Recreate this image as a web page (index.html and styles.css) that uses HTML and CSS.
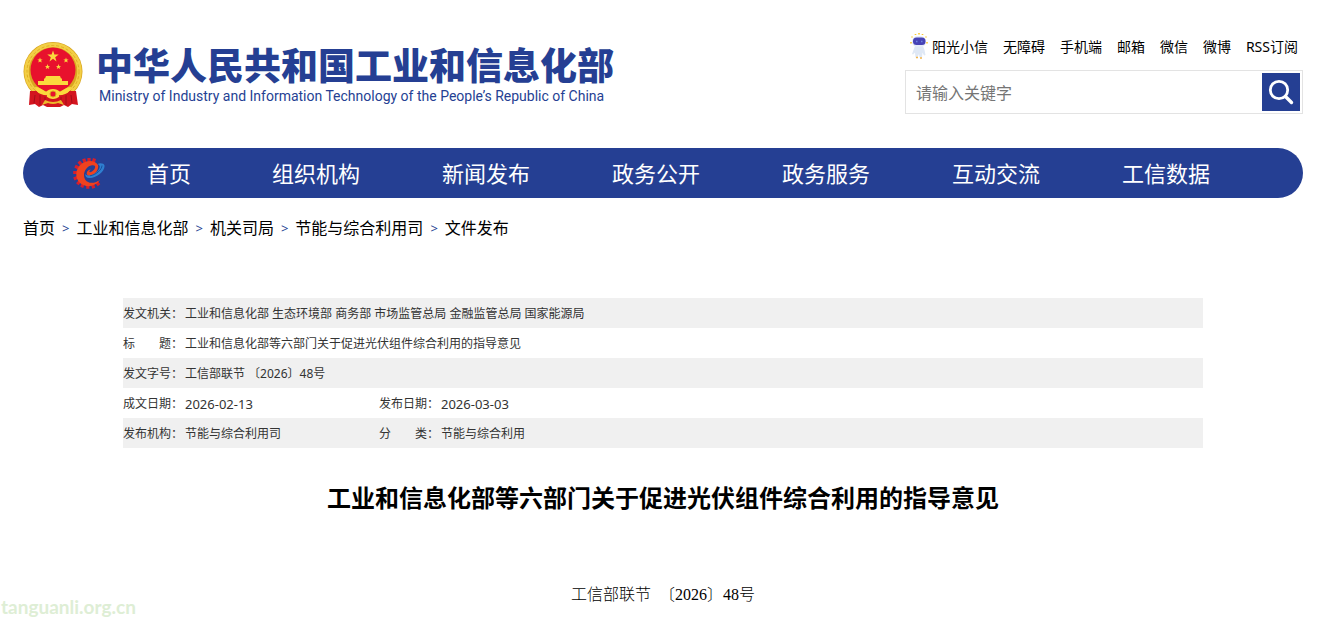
FILE: index.html
```html
<!DOCTYPE html>
<html lang="zh-CN">

<head>
    <meta charset="UTF-8">
    <meta name="viewport" content="width=device-width, initial-scale=1.0">
    <title>工业和信息化部等六部门关于促进光伏组件综合利用的指导意见</title>
    <link rel="stylesheet" href="styles.css">
</head>

<body>
    <div class="wrap">
        <header class="header">
            <a class="logo" href="#">
                <svg class="emblem" viewBox="0 0 60 66" aria-hidden="true">
                    <circle cx="30" cy="29.500" r="29.500" fill="#d9a520"/>
                    <circle cx="30" cy="29.500" r="26.500" fill="none" stroke="#f3cf45" stroke-width="4.500"/>
                    <circle cx="30" cy="29.500" r="26" fill="none" stroke="#e0ad25" stroke-width="1" stroke-dasharray="3 2"/>
                    <path d="M7 49l11 0 12 4 12-4 11 0 2 14-6-1-4 3-4-2-4 2H24l-4-2-4 2-4-3-6 1z" fill="#d3141f"/>
                    <path d="M12 53l-1 8M17 53v10M22 55v8M38 55v8M43 53v10M48 53l1 8" stroke="#a30d18" fill="none"/>
                    <circle cx="30" cy="28" r="22.500" fill="#e8112d"/>
                    <g fill="#fbd93d">
                        <path d="M30 8.500l1.400 4.100h4.300l-3.500 2.600 1.300 4.200-3.500-2.600-3.500 2.600 1.300-4.200-3.500-2.600h4.300z"/>
                        <path d="M17 15.500l.7 1.900h2l-1.600 1.200.6 2-1.700-1.200-1.700 1.200.6-2-1.600-1.200h2z"/>
                        <path d="M43 15.500l.7 1.900h2l-1.600 1.200.6 2-1.700-1.200-1.700 1.200.6-2-1.600-1.200h2z"/>
                        <path d="M24.500 22l.7 1.900h2l-1.600 1.200.6 2-1.700-1.200-1.700 1.200.6-2-1.600-1.200h2z"/>
                        <path d="M35.500 22l.7 1.900h2l-1.600 1.200.6 2-1.700-1.200-1.700 1.200.6-2-1.600-1.200h2z"/>
                        <path d="M23 34h14l1 2.500H22zM21 36.500h18v2.500H21zM15 39h30v4H15z"/>
                        <path d="M12 45c4 0 7 2 11 5 3-4 11-4 14 0 4-3 7-5 11-5-1 6-6 9-11 9-4 4-10 4-14 0-5 0-10-3-11-9z"/>
                    </g>
                    <circle cx="30" cy="52" r="3" fill="#e8112d" stroke="#d9a520" stroke-width="1"/>
                    <path d="M12 49c4 4 8 5 12 5M48 49c-4 4-8 5-12 5" stroke="#d3141f" stroke-width="1.500" fill="none"/>
                    <path d="M22 58q8 4 16 0l3 5-6-2q-5 2-10 0l-6 2z" fill="#edb62a"/>
                </svg>
                <span class="logo-text">
                    <span class="logo-cn">中华人民共和国工业和信息化部</span>
                    <span class="logo-en">Ministry of Industry and Information Technology of the People’s Republic of China</span>
                </span>
            </a>
            <div class="header-right">
                <div class="top-links">
                    <a class="robot-link" href="#">
                        <svg class="robot" viewBox="0 0 18 26" aria-hidden="true">
                            <path d="M2 3.500v1M5.500 1v1M9 0v1.500M12.500 1v1M16 3.500v1M1 9v1.500M17 9v1.500" stroke="#f7c72e" stroke-width="1.600"/>
                            <path d="M5 13h8l1.500 4 1 5-1.500.5-1.500-3-.5 5H9.500L9 21l-1.500 3.500H5.500l-.5-5-2 2-1-.5z" fill="#dfe8f5"/>
                            <rect x="2" y="3" width="14" height="11" rx="5.500" fill="#e5ebf8"/>
                            <rect x="3" y="4.500" width="12.500" height="7.500" rx="3.500" fill="#4743b5"/>
                            <path d="M6 8.500h1.500M11 8.500h1.500" stroke="#6f86e0" stroke-width="1.300"/>
                            <path d="M6 24.500h2M10 25h2" stroke="#f4b54b" stroke-width="1.500"/>
                        </svg>
                        <span>阳光小信</span>
                    </a>
                    <a href="#">无障碍</a>
                    <a href="#">手机端</a>
                    <a href="#">邮箱</a>
                    <a href="#">微信</a>
                    <a href="#">微博</a>
                    <a href="#">RSS订阅</a>
                </div>
                <form class="search">
                    <input type="text" placeholder="请输入关键字" aria-label="请输入关键字">
                    <button type="submit" aria-label="搜索">
                        <svg viewBox="0 0 38 38" aria-hidden="true">
                            <circle cx="17" cy="17" r="8.700" fill="none" stroke="#fff" stroke-width="2.800"/>
                            <path d="M23.500 23.500l6 6" stroke="#fff" stroke-width="3.400" stroke-linecap="round"/>
                        </svg>
                    </button>
                </form>
            </div>
        </header>

        <nav class="nav">
            <a class="nav-home" href="#">
                <svg class="nav-icon" viewBox="0 0 32 32" aria-hidden="true">
                    <g stroke="#d81e2c" stroke-width="3.200">
                        <path d="M21.500 1.500l-1.200 4M16 1v4M10.700 1.800l1.300 3.700M5.700 4.500l2.600 3M2 9.200l3.500 1.800M.2 15.500h4M.8 22l3.600-1.600M4.300 27.300l2.600-3M8.700 30.300l1.500-3.800M14.800 31.800v-4M20.800 31.200l-1.300-4M26 28.200l-2.500-3.200"/>
                    </g>
                    <path d="M25 8C22 3 14 3 9 6.500 2 11.500 1.500 21 7 26c6 5 15 4 20-3-6 4-12 3.500-14.500 0C9 18 12 10 18 8.500c4-1 5 1 3.500 3.500-1.500 2.500-4 3.500-5 3-.5-.5.500-2 1.500-2.500-3 0-5 3-4 5 1.500 2.500 7 1 9.500-3 1.500-2.500 2-4.500 1.500-6.500z" fill="#f0421e"/>
                    <path d="M24.500 7c3-1.500 6.500-.5 7 1.500.8 6-9 13-15.500 12.500-3-.3-4-2-3.500-4 2.500 3.500 9.500.5 13-4C27.500 10 27 8 24.500 7z" fill="#2f7fd0"/>
                    <path d="M29 8.500c0 4-6 9.500-12 10.300" stroke="#174f9e" stroke-width="1" fill="none"/>
                </svg>
                <span>首页</span>
            </a>
            <a href="#">组织机构</a>
            <a href="#">新闻发布</a>
            <a href="#">政务公开</a>
            <a href="#">政务服务</a>
            <a href="#">互动交流</a>
            <a href="#">工信数据</a>
        </nav>

        <div class="crumbs">
            <a href="#">首页</a>
            <span>&gt;</span>
            <a href="#">工业和信息化部</a>
            <span>&gt;</span>
            <a href="#">机关司局</a>
            <span>&gt;</span>
            <a href="#">节能与综合利用司</a>
            <span>&gt;</span>
            <a href="#">文件发布</a>
        </div>

        <main class="article">
            <table class="info">
                <colgroup>
                    <col class="col-label">
                    <col class="col-value">
                    <col class="col-label">
                    <col>
                </colgroup>
                <tr>
                    <th scope="row">发文机关：</th>
                    <td colspan="3">工业和信息化部 生态环境部 商务部 市场监管总局 金融监管总局 国家能源局</td>
                </tr>
                <tr>
                    <th scope="row">标　　题：</th>
                    <td colspan="3">工业和信息化部等六部门关于促进光伏组件综合利用的指导意见</td>
                </tr>
                <tr>
                    <th scope="row">发文字号：</th>
                    <td colspan="3">工信部联节 〔2026〕48号</td>
                </tr>
                <tr>
                    <th scope="row">成文日期：</th>
                    <td class="date">2026-02-13</td>
                    <th scope="row">发布日期：</th>
                    <td class="date">2026-03-03</td>
                </tr>
                <tr>
                    <th scope="row">发布机构：</th>
                    <td>节能与综合利用司</td>
                    <th scope="row">分　　类：</th>
                    <td>节能与综合利用</td>
                </tr>
            </table>
            <h1>工业和信息化部等六部门关于促进光伏组件综合利用的指导意见</h1>
            <p class="doc-no">工信部联节&ensp;〔2026〕48号</p>
        </main>
    </div>
    <div class="watermark">tanguanli.org.cn</div>
</body>

</html>
```

FILE: styles.css
```css
* {
    margin: 0;
    padding: 0;
    box-sizing: border-box;
}

body {
    position: relative;
    min-height: 100vh;
    padding: 0 28px 0 23px;
    background: #fff;
    color: #000;
    font-family: "Noto Sans", "Noto Sans CJK SC", sans-serif;
    font-size: 16px;
}

a {
    color: inherit;
    text-decoration: none;
}

.wrap {
    max-width: 1280px;
    margin: 0 auto;
}

/* 头部 */
.header {
    display: flex;
    justify-content: space-between;
    align-items: flex-start;
    height: 148px;
    padding-top: 33px;
}

.logo {
    display: flex;
    gap: 13px;
    padding-top: 9px;
    color: #253f93;
}

.emblem {
    width: 60px;
    height: 66px;
}

.logo-text {
    display: flex;
    flex-direction: column;
    white-space: nowrap;
}

.logo-cn {
    font-family: "Noto Sans CJK SC", sans-serif;
    font-size: 37px;
    line-height: 44px;
    font-weight: 900;
}

.logo-en {
    padding-left: 3px;
    font-family: Roboto, sans-serif;
    font-size: 14px;
    line-height: 20px;
}

.header-right {
    width: 398px;
}

.top-links {
    display: flex;
    justify-content: flex-end;
    align-items: center;
    gap: 15px;
    height: 26px;
    padding-right: 5px;
    font-size: 14px;
    white-space: nowrap;
}

.robot-link {
    display: flex;
    align-items: center;
    gap: 4px;
}

.robot {
    width: 18px;
    height: 26px;
}

.search {
    display: flex;
    height: 44px;
    margin-top: 11px;
    padding: 2px;
    border: 1px solid #e3e3e3;
}

.search input {
    flex: 1;
    min-width: 0;
    padding: 2px 8px 0;
    border: none;
    outline: none;
    font: inherit;
}

.search input::placeholder {
    color: #757575;
}

.search button {
    width: 38px;
    height: 38px;
    border: none;
    background: #253f93;
    cursor: pointer;
}

.search button svg {
    display: block;
}

/* 导航 */
.nav {
    display: flex;
    height: 50px;
    padding: 0 52px 0 50px;
    border-radius: 25px;
    background: #253f93;
    color: #fff;
    font-size: 22px;
    line-height: 50px;
    white-space: nowrap;
}

.nav a {
    flex: 1;
    text-align: center;
}

.nav .nav-home {
    display: flex;
    flex: 0 0 158px;
    align-items: center;
    gap: 42px;
}

.nav-icon {
    width: 32px;
    height: 32px;
}

/* 面包屑 */
.crumbs {
    display: flex;
    gap: 7px;
    padding-top: 18px;
    line-height: 24px;
}

.crumbs span {
    color: #253f93;
    font-size: 13px;
}

/* 正文 */
.article {
    max-width: 1080px;
    margin: 58px auto 0;
}

.info {
    width: 100%;
    border-collapse: collapse;
    table-layout: fixed;
    color: #333;
    font-size: 12px;
    line-height: 28px;
}

.info tr:nth-child(odd) {
    background: #f0f0f0;
}

.info th,
.info td {
    padding-top: 2px;
}

.info th {
    font-weight: normal;
    text-align: left;
    white-space: nowrap;
}

.col-label {
    width: 62px;
}

.col-value {
    width: 194px;
}

.info .date {
    font-size: 13px;
}

.article h1 {
    margin-top: 32px;
    font-size: 24px;
    line-height: 36px;
    text-align: center;
}

.doc-no {
    margin-top: 67px;
    font-family: "Liberation Serif", "Noto Sans CJK SC", serif;
    font-size: 16px;
    font-weight: 300;
    line-height: 24px;
    text-align: center;
}

.watermark {
    position: absolute;
    left: 1px;
    bottom: 0;
    color: #deeed5;
    font-family: Lato, sans-serif;
    font-size: 19px;
    font-weight: 700;
    line-height: 23px;
}
```
